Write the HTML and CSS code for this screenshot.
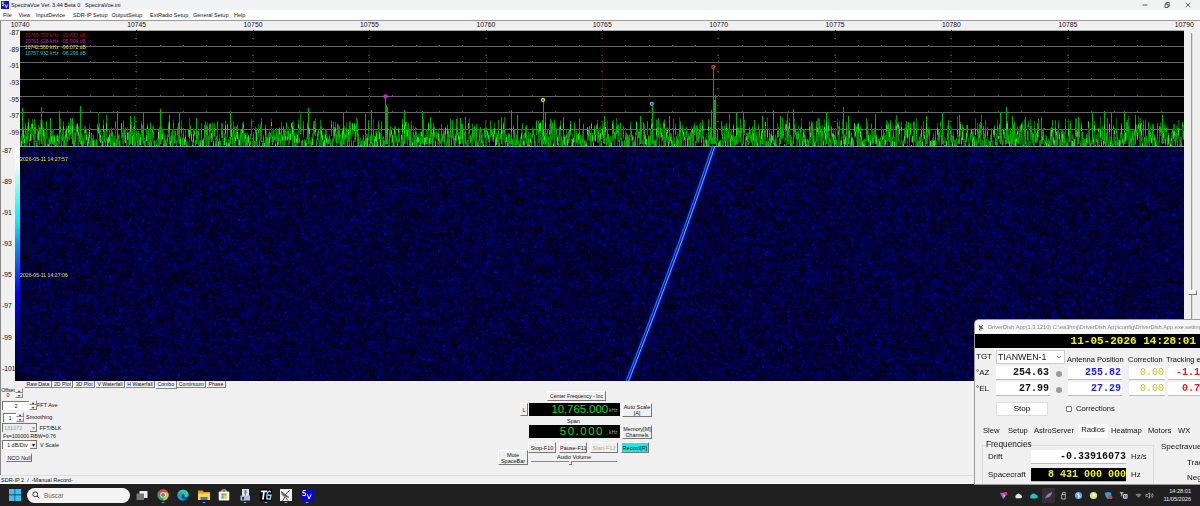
FILE: index.html
```html
<!DOCTYPE html>
<html lang="es">
<head>
    <meta charset="UTF-8">
    <meta name="viewport" content="width=device-width, initial-scale=1.0">
    <title>SpectraVue</title>
    <link rel="stylesheet" href="styles.css">
</head>
<body>
    <header class="titlebar">
        <svg class="app-icon" viewBox="0 0 8 8">
            <rect width="8" height="8" fill="#1414b8"/>
            <path d="M3.2 1.2H1.3v1.7h1.6v1.6H1M4.3 3.5l1 3.3L6.6 3.5" fill="none" stroke="#fff" stroke-width=".8"/>
        </svg>
        <span class="title-text">SpectraVue Ver. 3.44 Beta 0</span>
        <span class="title-text title-file">SpectraVue.ini</span>
        <div class="window-buttons">
            <svg viewBox="0 0 6 6"><path d="M.5 3h5"/></svg>
            <svg viewBox="0 0 6 6"><path d="M1 2h3v3.500H1zM2 2V.6h3.300v3.800H4"/></svg>
            <svg viewBox="0 0 6 6"><path d="M.7.7l4.600 4.600M5.300.7L.7 5.300"/></svg>
        </div>
    </header>

    <nav class="menubar">
        <span class="m-file">File</span>
        <span class="m-view">View</span>
        <span class="m-input">InputDevice</span>
        <span class="m-sdr">SDR-IP Setup</span>
        <span class="m-output">OutputSetup</span>
        <span class="m-ext">ExtRadio Setup</span>
        <span class="m-general">General Setup</span>
        <span>Help</span>
    </nav>

    <div class="ruler">
        <div class="ruler-labels">
            <span>10740</span><span>10745</span><span>10750</span><span>10755</span><span>10760</span><span>10765</span><span>10770</span><span>10775</span><span>10780</span><span>10785</span><span>10790</span>
        </div>
    </div>

    <main class="plots">
        <div class="scales">
            <div class="scale scale-spectrum">
                <span>-87</span><span>-89</span><span>-91</span><span>-93</span><span>-95</span><span>-97</span><span>-99</span>
            </div>
            <div class="scale-row">
                <div class="scale scale-waterfall">
                    <span>-87</span><span>-89</span><span>-91</span><span>-93</span><span>-95</span><span>-97</span><span>-99</span><span>-101</span>
                </div>
                <div class="palette"></div>
            </div>
        </div>
        <div class="plot-area">
            <canvas id="plot" width="1164" height="351"></canvas>
            <div class="peaks">
                <p class="peak-red">10769.759 kHz &nbsp;-90.840 dB</p>
                <p class="peak-magenta">10761.328 kHz &nbsp;-95.904 dB</p>
                <p class="peak-yellow">10742.560 kHz &nbsp;-96.072 dB</p>
                <p class="peak-cyan">10757.932 kHz &nbsp;-96.296 dB</p>
            </div>
            <span class="stamp stamp-first">2026-05-11 14:27:57</span>
            <span class="stamp stamp-second">2026-05-11 14:27:06</span>
        </div>
        <div class="vslider">
            <div class="vslider-track"></div>
            <div class="vslider-thumb"></div>
            <div class="vslider-track rest"></div>
        </div>
    </main>

    <section class="panel">
        <div class="panel-left">
            <div class="tabs">
                <span>Raw Data</span><span>2D Plot</span><span>3D Plot</span><span>V Waterfall</span><span>H Waterfall</span><span class="active">Combo</span><span>Continuum</span><span>Phase</span>
            </div>
            <div class="row row-offset">
                <div class="offset">Offset<br>0</div>
                <div class="spin"><i>▴</i><i>▾</i></div>
            </div>
            <div class="row row-axe">
                <div class="field">2</div>
                <div class="spin"><i>▴</i><i>▾</i></div>
                <span>FFT Ave</span>
            </div>
            <div class="row row-smooth">
                <div class="field small">1</div>
                <div class="spin"><i>▴</i><i>▾</i></div>
                <span>Smoothing</span>
            </div>
            <div class="row row-blk">
                <div class="combo disabled">131072<i>▾</i></div>
                <span>FFT/BLK</span>
            </div>
            <div class="row row-info">Fs=100000 RBW=0.76</div>
            <div class="row row-scale">
                <div class="combo">1 dB/Div<i>▾</i></div>
                <span>V Scale</span>
            </div>
            <button class="btn btn-nco">NCO Null</button>
        </div>

        <div class="tuner">
            <button class="btn btn-center">Center Frequency - Inc</button>
            <div class="tuner-row">
                <button class="btn btn-l">L</button>
                <div class="lcd"><b class="lcd-center">10,765.000</b><small>kHz</small></div>
                <button class="btn btn-side">Auto Scale<br>[A]</button>
            </div>
            <div class="span-label">Span</div>
            <div class="tuner-row tuner-span">
                <div class="lcd"><b class="lcd-span">50.000</b><small>kHz</small></div>
                <button class="btn btn-side">Memory[M]<br>Channels</button>
            </div>
            <div class="tuner-row tuner-keys">
                <button class="btn">Stop-F10</button>
                <button class="btn">Pause-F11</button>
                <button class="btn off">Start-F12</button>
                <button class="btn record">Record[R]</button>
            </div>
            <div class="tuner-audio">
                <button class="btn btn-mute">Mute<br>SpaceBar</button>
                <div class="audio">
                    <span>Audio Volume</span>
                    <div class="audio-track"><div class="audio-thumb"></div></div>
                </div>
            </div>
        </div>
    </section>

    <div class="statusbar">SDR-IP 2 &nbsp;/ &nbsp;-Manual Record-</div>

    <aside class="dish">
        <div class="dish-title">
            <svg viewBox="0 0 8 8"><path d="M1 1l6 4.500M6.500.8L3.500 4M2 2.200q0 3.500 4 3.500M3 5L1.500 7.300h3" fill="none" stroke="#222"/></svg>
            <span>DriverDish.App(1.3.1210) C:\ea3hmj\DriverDish.App\config\DriverDish.App.exe.settings</span>
        </div>
        <div class="dish-clock">11-05-2026 14:28:01</div>
        <div class="dish-grid">
            <span class="lbl">TGT</span>
            <div class="target"><span>TIANWEN-1</span><svg viewBox="0 0 6 4"><path d="M1 1l2 2 2-2" fill="none" stroke="#555" stroke-width=".7"/></svg></div>
            <span class="head head-ant">Antenna Position</span>
            <span class="head head-cor">Correction</span>
            <span class="head head-trk">Tracking error</span>

            <span class="lbl">°AZ</span>
            <div class="val">254.63</div>
            <i class="led"></i>
            <div class="val blue">255.82</div>
            <div class="val olive">0.00</div>
            <div class="val red">-1.19</div>

            <span class="lbl">°EL</span>
            <div class="val">27.99</div>
            <i class="led"></i>
            <div class="val blue">27.29</div>
            <div class="val olive">0.00</div>
            <div class="val red">0.70</div>
        </div>
        <div class="dish-actions">
            <button class="stop">Stop</button>
            <i class="check"></i>
            <span>Corrections</span>
        </div>
        <div class="dish-tabs">
            <span class="t1">Slew</span><span class="t2">Setup</span><span class="t3">AstroServer</span><span class="t4 active">Radios</span><span class="t5">Heatmap</span><span class="t6">Motors</span><span class="t7">WX</span>
        </div>
        <div class="dish-page">
            <fieldset class="freqs">
                <legend>Frequencies</legend>
                <div class="freq-row"><span>Drift</span><div class="val drift">-0.33916073</div><span>Hz/s</span></div>
                <div class="freq-row"><span>Spacecraft</span><div class="val craft">8 431 000 000</div><span>Hz</span></div>
            </fieldset>
            <div class="spectravue">
                <p>Spectravue</p>
                <p class="indent">Track</p>
                <p class="indent neg">Negate</p>
            </div>
        </div>
    </aside>

    <footer class="taskbar">
        <svg class="start" viewBox="0 0 12 12">
            <path d="M0 0h5.600v5.600H0zM6.200 0H12v5.600H6.200zM0 6.200h5.600V12H0zM6.200 6.200H12V12H6.200z" fill="#42bdf5"/>
        </svg>
        <div class="search">
            <svg viewBox="0 0 8 8"><circle cx="3.300" cy="3.300" r="2.400" fill="none" stroke="#222" stroke-width=".9"/><path d="M5 5l2.200 2.200" stroke="#222" stroke-width="1"/></svg>
            <span>Buscar</span>
        </div>
        <div class="apps">
            <svg viewBox="0 0 12 14"><rect x="3.500" y="2" width="8" height="7" fill="#eee"/><rect x=".5" y="4.500" width="7.500" height="6.500" fill="#777"/></svg>
            <svg viewBox="0 0 12 14">
                <circle cx="6" cy="6" r="5.600" fill="#34a853"/>
                <path d="M1.100 3.200A5.600 5.600 0 0 1 11 3.500H6L3.600 7.400z" fill="#ea4335"/>
                <path d="M11 3.500A5.600 5.600 0 0 1 5.600 11.600L8.400 7.300 6 3.500z" fill="#fbbc05"/>
                <circle cx="6" cy="6" r="2.700" fill="#fff"/><circle cx="6" cy="6" r="2.100" fill="#4285f4"/>
                <rect x="4.700" y="13" width="2.600" height="1" fill="#999"/>
            </svg>
            <svg viewBox="0 0 12 14">
                <circle cx="6" cy="6" r="5.600" fill="#0c74c8"/>
                <path d="M.7 4.800C2-.6 11-.8 11.600 5.500 11.500 8.600 8 8.600 7.200 7.700 8.300 6 6.700 4 4.500 4 2.500 4 1 5 .5 6.500z" fill="#35c98b"/>
                <path d="M.5 6C1 3 6 2.500 7 5.500 3.500 4.500 3 9.500 7 11.500 3 12 0 9 .5 6z" fill="#1c9cdd"/>
                <path d="M6.700 5.500q1 1 .5 2.400 1.500 1.300 4.200.2-1 1.500-3 1.500Q5 9 5.200 7q0-1.500 1.500-1.500z" fill="#1d2833"/>
            </svg>
            <svg viewBox="0 0 12 14">
                <path d="M0 1.500h4.500l1.300 1.600H12V11H0z" fill="#e59a17"/><path d="M0 4.300h12V11H0z" fill="#ffd253"/>
                <path d="M2.500 8h7v3h-7z" fill="#2c7fd0"/><rect x="4.700" y="13" width="2.600" height="1" fill="#999"/>
            </svg>
            <svg viewBox="0 0 12 14">
                <path d="M4 3V1h4v2" fill="none" stroke="#ddd" stroke-width="1"/><rect x=".7" y="2.500" width="10.600" height="9" rx="1" fill="#f4f4f4"/>
                <path d="M3.500 4.500h2.200v2.200H3.500z" fill="#f25022"/><path d="M6.300 4.500h2.200v2.200H6.300z" fill="#7fba00"/>
                <path d="M3.500 7.300h2.200v2.200H3.500z" fill="#00a4ef"/><path d="M6.300 7.300h2.200v2.200H6.300z" fill="#ffb900"/>
            </svg>
            <svg viewBox="0 0 12 14">
                <path d="M3 0h7v8H3z" fill="#eef"/><path d="M4.500 2h4M4.500 4h4M6.500 1v6" stroke="#476aa0" stroke-width=".8"/>
                <path d="M1.500 6.500h9.500v5H1.500z" fill="#aebdde"/><path d="M3 8h2v2.500H3z" fill="#26355b"/><rect x="4.700" y="13" width="2.600" height="1" fill="#999"/>
            </svg>
            <svg viewBox="0 0 12 14">
                <rect width="12" height="12" fill="#050505"/><path d="M.8 2.300h6.400M4 2.300L3 10.500" stroke="#fff" stroke-width="1.700"/>
                <path d="M10.800 2.800Q7.500 1 7 6T7.400 10h2.800L11 6.200H8" fill="none" stroke="#8edcf5" stroke-width="1.400"/><rect x="4.700" y="13" width="2.600" height="1" fill="#999"/>
            </svg>
            <svg viewBox="0 0 12 14">
                <rect width="12" height="12" fill="#eee"/><path d="M1 2.500Q1.500 9 8.800 8.400z" fill="#777"/>
                <path d="M1 2.500l8 6M5 6l4.500-4.500M5 8l-2.500 4M5.500 8.500l2.500 3" stroke="#222" stroke-width=".8"/><rect x="4.700" y="13" width="2.600" height="1" fill="#999"/>
            </svg>
            <svg viewBox="0 0 12 14">
                <rect width="12" height="12" fill="#0505d5"/><path d="M4.700 1.500H2v2.500h2.500v2.500H1.500M6.300 5.200L8 10l2.200-4.800" fill="none" stroke="#fff" stroke-width="1"/>
                <rect x="4.700" y="13" width="2.600" height="1" fill="#999"/>
            </svg>
        </div>
        <div class="tray">
            <svg viewBox="0 0 10 10"><path d="M1 2h4l1 3-1.500 4z" fill="#8a5cf0"/><path d="M5 2h4L5 9z" fill="#d9b4e8"/><circle cx="7.500" cy="3" r="2" fill="#e33"/></svg>
            <svg viewBox="0 0 10 10"><path d="M2.500 8a2 2 0 0 1 0-3.500 2.700 2.700 0 0 1 5 0 1.800 1.800 0 0 1 0 3.500z" fill="#e6e6e6"/></svg>
            <svg viewBox="0 0 10 10"><path d="M2.500 8.300a2.200 2.200 0 0 1 0-4 2.900 2.900 0 0 1 5.200 0 2 2 0 0 1 0 4z" fill="#20c4cf"/></svg>
            <span class="tray-hot"><svg viewBox="0 0 10 10"><path d="M1 9Q2 3 9 1 8 7 2.500 7.500z" fill="#9a72c8"/></svg></span>
            <svg viewBox="0 0 10 10"><path d="M3 4h4v5H3zM4 4V1.500h3V4" fill="none" stroke="#ddd" stroke-width=".8"/></svg>
            <svg viewBox="0 0 10 10"><circle cx="5" cy="5" r="4" fill="#62a6ee"/><path d="M3 3l4 4M5 2v6l2-2-4-3" fill="none" stroke="#e8f3ff" stroke-width=".8"/></svg>
            <svg viewBox="0 0 10 10"><circle cx="5" cy="5" r="4" fill="#dbe58c"/><path d="M5 2.500V5l2-1.500" fill="none" stroke="#fff" stroke-width="1"/></svg>
            <svg viewBox="0 0 10 10"><path d="M1 2l4-1 3 1v3Q7 8 4.500 9 1 7 1 2z" fill="#2aa1e0"/><circle cx="7" cy="7" r="2.300" fill="#e23b3b"/></svg>
            <svg viewBox="0 0 10 10"><path d="M1 2h4M3 2v4M5 4v4h4V4zM7 4v4" fill="none" stroke="#eef" stroke-width="1"/><path d="M6 6h3" stroke="#7c7cff"/></svg>
            <svg class="wifi" viewBox="0 0 10 10"><path d="M1.500 4Q5 1.500 8.500 4L5 7.500z" fill="#777"/></svg>
            <svg viewBox="0 0 10 10"><path d="M1 4h2l2-2v6L3 6H1zM6.500 3.500q1.500 1.500 0 3M8 2.500q2 2.500 0 5" fill="none" stroke="#ddd" stroke-width=".7"/></svg>
        </div>
        <div class="clock">14:28:01<br>11/05/2026</div>
    </footer>

    <script src="script.js"></script>
</body>
</html>
```
FILE: styles.css
```css
* {
    margin: 0;
    padding: 0;
    box-sizing: border-box;
}

body {
    position: relative;
    width: 1200px;
    height: 506px;
    overflow: hidden;
    display: flex;
    flex-direction: column;
    background: #f0f0f0;
    font-family: "Liberation Sans", Arial, sans-serif;
    font-size: 5.5px;
    color: #111;
    white-space: nowrap;
}

i {
    font-style: normal;
}

/* title + menu */
.titlebar {
    height: 10px;
    display: flex;
    align-items: center;
    background: #f1f2f4;
}

.app-icon {
    width: 8px;
    height: 8px;
    margin: 0 2px 0 1px;
}

.title-text {
    width: 74px;
    font-size: 5.5px;
}

.title-file {
    width: auto;
}

.window-buttons {
    margin-left: auto;
    margin-right: 9px;
    display: flex;
    gap: 15.500px;
}

.window-buttons svg {
    width: 6px;
    height: 6px;
    fill: none;
    stroke: #222;
    stroke-width: .7;
}

.menubar {
    height: 10px;
    padding-left: 3px;
    display: flex;
    align-items: center;
    background: #fff;
    font-size: 5.5px;
}

.m-file { width: 15.500px; }
.m-view { width: 17.500px; }
.m-input { width: 37px; }
.m-sdr { width: 38.500px; }
.m-output { width: 38.500px; }
.m-ext { width: 43px; }
.m-general { width: 41px; }

.ruler {
    height: 10px;
    border-top: 1px solid #9a9a9a;
    box-shadow: inset 1px 0 #888;
    overflow: hidden;
}

.ruler-labels {
    width: 1280.400px;
    margin-left: -38px;
    display: flex;
    font-size: 6.8px;
    line-height: 8px;
    text-align: center;
}

.ruler-labels span {
    flex: 1;
}

/* plots */
.plots {
    height: 351px;
    display: flex;
}

.scales {
    width: 20px;
    border-left: 1px solid #888;
    font-size: 6.8px;
}

.scale {
    display: flex;
    flex-direction: column;
    text-align: right;
}

.scale span {
    flex: none;
}

.scale-spectrum {
    height: 117px;
    padding-right: 1px;
}

.scale-spectrum span {
    height: 16.700px;
    line-height: 5px;
}

.scale-row {
    display: flex;
    justify-content: flex-end;
}

.scale-waterfall {
    height: 234px;
    width: 14px;
    text-align: left;
    padding-left: 1px;
}

.scale-waterfall span {
    height: 31.100px;
    line-height: 8px;
}

.palette {
    width: 5px;
    height: 234px;
    background: linear-gradient(#fff 0, #e8ffff 8%, #30ffff 24%, #00e8ff 33%, #0090ff 42%, #0050ff 52%, #0000ff 62%, #0000a8 75%, #000060 87%, #000018 100%);
}

.plot-area {
    position: relative;
    width: 1164px;
    height: 351px;
}

.plot-area canvas {
    display: block;
}

.peaks {
    position: absolute;
    left: 5px;
    top: 2px;
    font-size: 5px;
    line-height: 6.100px;
}

.peak-red { color: #c01010; }
.peak-magenta { color: #c818c8; }
.peak-yellow { color: #e0e020; }
.peak-cyan { color: #18c8c8; }

.stamp {
    position: absolute;
    left: 0;
    font-size: 5.200px;
    line-height: 6px;
    color: #e4e430;
}

.stamp-first { top: 126px; }
.stamp-second { top: 242px; }

.vslider {
    flex: 1;
    padding-top: 3px;
    display: flex;
    flex-direction: column;
    align-items: center;
}

.vslider-track {
    width: 2px;
    height: 257px;
    flex: none;
    border-left: 1px solid #999;
    background: #ddd;
}

.vslider-track.rest {
    height: auto;
    flex: 1;
}

.vslider-thumb {
    width: 9px;
    height: 5px;
    background: #f0f0f0;
    border: 1px solid #fff;
    border-right-color: #777;
    border-bottom-color: #777;
}

/* bottom panel */
.panel {
    height: 94px;
    border-left: 1px solid #888;
    display: flex;
}

.panel-left {
    width: 497px;
    font-size: 5.500px;
}

.tabs {
    height: 9px;
    margin-top: -1px;
    padding-left: 24px;
    display: flex;
}

.tabs span {
    height: 8px;
    padding: 0 1.500px;
    border-right: 1px solid #777;
    border-bottom: 1px solid #888;
    line-height: 8px;
    font-size: 5.200px;
    margin-right: .7px;
}

.tabs .active {
    height: 9px;
    line-height: 9px;
}

.row {
    display: flex;
    align-items: center;
}

.row-offset {
    height: 10px;
    margin-top: -1px;
}

.offset {
    width: 14px;
    line-height: 5px;
    text-align: center;
    font-size: 5.200px;
}

.spin {
    width: 8px;
    height: 10px;
    display: flex;
    flex-direction: column;
}

.spin i {
    height: 5px;
    font-size: 4px;
    line-height: 4px;
    text-align: center;
    border: 1px solid #fff;
    border-right-color: #888;
    border-bottom-color: #888;
}

.row-axe {
    margin-top: 2px;
    padding-left: 1px;
}

.field {
    width: 27px;
    height: 9px;
    background: #fff;
    border-top: 1px solid #777;
    border-left: 1px solid #777;
    text-align: center;
    line-height: 8px;
}

.field.small {
    width: 13px;
}

.row-smooth {
    margin-top: 2px;
    padding-left: 2px;
}

.row-smooth span {
    padding-left: 2px;
}

.combo {
    width: 35px;
    height: 9px;
    padding-left: 4px;
    display: flex;
    justify-content: space-between;
    background: #fff;
    border-top: 1px solid #777;
    border-left: 1px solid #777;
    line-height: 8px;
}

.combo i {
    width: 7px;
    background: #f0f0f0;
    border-right: 1px solid #777;
    border-bottom: 1px solid #777;
    text-align: center;
}

.combo.disabled {
    padding-left: 1px;
    background: #eee;
    color: #999;
}

.row-blk {
    margin-top: 1px;
    padding-left: 1px;
    gap: 2.500px;
}

.row-info {
    height: 8px;
    padding-left: 2px;
    font-size: 5.200px;
}

.row-scale {
    padding-left: 1px;
    gap: 3px;
}

.btn {
    display: block;
    border: 1px solid #fff;
    border-right-color: #777;
    border-bottom-color: #777;
    background: #f0f0f0;
    font-family: inherit;
    font-size: 5.500px;
    line-height: 6px;
    text-align: center;
    white-space: nowrap;
    color: #111;
}

.btn-nco {
    width: 26px;
    height: 9px;
    margin: 4px 0 0 5px;
}

.tuner {
    width: 160px;
    padding-top: 10px;
}

.btn-center {
    width: 59px;
    height: 10px;
    margin-left: 49px;
    font-size: 5.200px;
}

.tuner-row {
    display: flex;
    margin-left: 22px;
    margin-top: 2px;
    height: 14px;
}

.btn-l {
    width: 8px;
    height: 13px;
    margin-right: 1px;
}

.lcd {
    width: 91px;
    height: 13px;
    padding-right: 1px;
    display: flex;
    align-items: center;
    justify-content: flex-end;
    background: #000;
    color: #10d820;
}

.lcd b {
    font-weight: 400;
    font-size: 11.500px;
    line-height: 13px;
}

.lcd small {
    width: 11px;
    padding-left: 1px;
    font-size: 5px;
    color: #9aa09a;
}

.lcd-center {
    letter-spacing: -.1px;
}

.lcd .lcd-span {
    letter-spacing: 1.500px;
    margin-right: 4px;
}

.btn-side {
    width: 30px;
    height: 14px;
    margin-left: 2px;
}

.span-label {
    height: 7px;
    line-height: 8px;
    margin-left: 69px;
}

.tuner-span {
    margin-left: 31px;
    margin-top: 1px;
}

.tuner-keys {
    margin: 3px 0 0 30px;
    height: 11px;
    gap: 3px;
}

.tuner-keys .btn {
    width: 28px;
    height: 11px;
}

.tuner-keys .off {
    color: #aaa;
}

.tuner-keys .record {
    background: #20e8e8;
}

.tuner-audio {
    display: flex;
    margin-top: -3px;
}

.btn-mute {
    width: 30px;
    height: 15px;
}

.audio {
    width: 86px;
    margin: 4px 0 0 3px;
    line-height: 6px;
    text-align: center;
}

.audio-track {
    margin-top: 1px;
    height: 1px;
    background: #888;
}

.audio-thumb {
    width: 3px;
    height: 4px;
    margin-left: 38px;
    background: #f0f0f0;
    border-right: 1px solid #777;
    border-bottom: 1px solid #777;
}

.statusbar {
    height: 9px;
    padding-left: 1px;
    border-top: 1px solid #ddd;
    border-bottom: 1px solid #fff;
    line-height: 8px;
    font-size: 5.500px;
}

/* DriverDish window */
.dish {
    position: absolute;
    left: 975px;
    top: 320px;
    width: 225px;
    height: 164px;
    overflow: hidden;
    background: #f0f0f0;
    border-top-left-radius: 4px;
    box-shadow: 0 0 0 1px #999;
    font-size: 8px;
}

.dish-title {
    height: 14px;
    padding-left: 3px;
    display: flex;
    align-items: center;
    gap: 4px;
    background: #f6f6f6;
    color: #888;
    font-size: 5.700px;
    letter-spacing: -.04px;
}

.dish-title svg {
    width: 6px;
    height: 7px;
    flex: none;
}

.dish-clock {
    height: 14px;
    padding-right: 4px;
    background: #000;
    color: #f0f020;
    font: bold 11px/14px "Liberation Mono", monospace;
    text-align: right;
}

.dish-grid {
    width: 262px;
    padding: 2px 0 0 1px;
    display: grid;
    grid-template-columns: 20px 54px 18px 54px 7px 36px 3px 68px;
    grid-template-rows: 16px 16px 16px;
}

.dish-grid .lbl {
    grid-column: 1;
    line-height: 13px;
}

.target {
    grid-column: 2 / 4;
    width: 69px;
    height: 14px;
    padding: 0 2px 0 1px;
    display: flex;
    align-items: center;
    justify-content: space-between;
    background: #fff;
    border: 1px solid #ccc;
    font-size: 8.800px;
}

.target svg {
    width: 6px;
    height: 4px;
}

.head {
    font-size: 7.500px;
    line-height: 20px;
}

.head-ant { grid-column: 4; margin-left: -1px; }
.head-cor { grid-column: 6; margin-left: -1px; }
.head-trk { grid-column: 8; margin-left: -2px; }

.val {
    height: 14px;
    background: #fff;
    border-bottom: 1px solid #bbb;
    font: bold 10px/13px "Liberation Mono", monospace;
    text-align: right;
}

.dish-grid .val {
    height: 14px;
    padding-right: 1px;
}

.dish-grid .blue { grid-column: 4; color: #2020e8; }
.dish-grid .olive { grid-column: 6; color: #c0c030; font-weight: 400; }
.dish-grid .red { grid-column: 8; color: #e02020; padding-right: 30px; }

.led {
    width: 6px;
    height: 6px;
    margin: 5px 0 0 6px;
    border-radius: 50%;
    background: #9a9a9a;
}

.dish-actions {
    height: 17px;
    margin-top: 2px;
    padding-left: 21px;
    display: flex;
    align-items: center;
    font-size: 7.600px;
}

.stop {
    width: 52px;
    height: 14px;
    border: 1px solid #ddd;
    background: #fdfdfd;
    font: 8px "Liberation Sans", sans-serif;
}

.check {
    width: 6px;
    height: 6px;
    margin: 0 4px 0 18px;
    border: 1px solid #777;
    border-radius: 1px;
    background: #fff;
}

.dish-tabs {
    height: 14px;
    margin-top: 7px;
    padding-left: 8px;
    display: flex;
    font-size: 7.600px;
    line-height: 14px;
}

.t1 { width: 25px; }
.t2 { width: 26px; }
.t3 { width: 44px; }
.t4 { width: 30px; }
.t5 { width: 40px; padding-left: 3px; }
.t6 { width: 30px; }

.dish-tabs .active {
    background: #fafafa;
    text-align: center;
    line-height: 12px;
}

.dish-page {
    display: flex;
    padding: 3px 0 0 7px;
}

.freqs {
    width: 172px;
    height: 60px;
    flex: none;
    padding-left: 5px;
    border: 1px solid #ddd;
    font-size: 7.900px;
}

.freqs legend {
    margin-left: -2px;
    padding-bottom: 2px;
    font-size: 8.300px;
    line-height: 7px;
}

.freq-row {
    display: flex;
    height: 18px;
    line-height: 14px;
}

.freq-row span:first-child {
    width: 43px;
}

.freq-row span:last-child {
    padding-left: 5px;
}

.drift {
    width: 95px;
}

.craft {
    width: 95px;
    background: #000;
    color: #f0f020;
}

.spectravue {
    padding: 1px 0 0 7px;
    font-size: 8px;
    line-height: 9px;
}

.indent {
    padding: 7px 0 0 26px;
}

.indent.neg {
    padding-top: 6px;
}

/* taskbar */
.taskbar {
    height: 22px;
    padding-left: 9px;
    display: flex;
    align-items: center;
    background: #202020;
}

.start {
    width: 12px;
    height: 12px;
}

.search {
    width: 103px;
    height: 15px;
    margin: 0 6px;
    padding-left: 5px;
    display: flex;
    align-items: center;
    gap: 4px;
    border-radius: 8px;
    background: #f3f3f3;
    color: #666;
    font-size: 6.300px;
}

.search svg {
    width: 8px;
    height: 8px;
}

.apps {
    display: flex;
    gap: 8.600px;
}

.apps svg {
    width: 12px;
    height: 14px;
    margin-top: 1px;
}

.tray {
    margin-left: auto;
    display: flex;
    align-items: center;
    gap: 6px;
}

.tray svg {
    display: block;
    width: 9px;
    height: 9px;
}

.tray-hot {
    margin: 0 -2px;
    padding: 3px 2px;
    border-radius: 2px;
    background: #333035;
}

.tray .wifi {
    margin-right: -4px;
}

.clock {
    width: 46px;
    padding-right: 9px;
    color: #eee;
    font-size: 5.600px;
    line-height: 8px;
    text-align: right;
}
```
FILE: script.js
```js
const canvas = document.getElementById('plot');
const ctx = canvas.getContext('2d');
const W = canvas.width;
const H = canvas.height;
const SPLIT = 117;
const LEFT = 20;

// fixed seed so the noise is the same on every load
let seed = 20260511;
function rand() {
    seed = (seed * 1664525 + 1013904223) >>> 0;
    return seed / 4294967296;
}

function drawGrid() {
    ctx.fillStyle = '#000';
    ctx.fillRect(0, 0, W, SPLIT);
    for (let i = 0; i <= 6; i++) {
        const y = Math.round(i * 16.65);
        ctx.fillStyle = i ? '#666' : '#aaa';
        ctx.fillRect(0, i ? y - 1 : 0, W, 1);
        ctx.fillStyle = '#585858';
        for (let k = 1; k < 50; k++) {
            ctx.fillRect(Math.round(k * 23.28), y - 2, 1, 2);
        }
    }
    for (let k = 1; k < 10; k++) {
        const x = Math.round(k * 116.4);
        ctx.fillStyle = k === 5 ? '#702020' : '#484848';
        for (let y = 8; y < SPLIT; y += 16.65) {
            ctx.fillRect(x - 1, Math.round(y), 2, 1);
        }
        ctx.fillStyle = k === 5 ? '#401010' : '#1c1c1c';
        for (let y = 0; y < SPLIT; y += 3) {
            ctx.fillRect(x, y, 1, 1);
        }
    }
}

// [x, y] of the tallest spikes, window coordinates
const spikes = [
    [22, 108], [41, 107], [50, 118], [59, 111], [72, 118], [80, 106], [117, 111], [130, 116], [143, 113],
    [160, 109], [169, 115], [179, 113], [196, 118], [230, 113], [308, 108], [343, 113], [365, 114], [371, 110],
    [385, 98], [386, 105], [387, 107], [404, 110], [422, 111], [430, 117], [460, 118], [465, 117], [501, 117],
    [511, 110], [517, 115], [543, 101], [545, 112], [563, 117], [579, 119], [604, 116], [640, 116], [652, 106],
    [669, 116], [711, 110], [713, 67], [714, 100], [715, 95], [736, 113], [743, 112], [762, 116], [773, 110],
    [780, 116], [793, 109], [826, 112], [843, 107], [848, 116], [875, 114], [926, 116], [942, 113], [959, 115],
    [1000, 112], [1006, 107], [1012, 116], [1025, 117], [1041, 117], [1078, 117], [1092, 113], [1104, 111],
    [1111, 112], [1124, 111], [1135, 115], [1162, 115]
];

function drawSpectrum() {
    const tall = new Map(spikes.map(([x, y]) => [x - LEFT, y - 30]));
    let prev = 105;
    for (let x = 0; x < W; x++) {
        let top = 111 - Math.pow(rand(), 1.3) * 23;
        if (rand() < 0.07) top -= 6;
        let bottom = Math.min(SPLIT, Math.max(prev, top + 4 + rand() * 15));
        if (rand() < 0.3) bottom = SPLIT;
        let shade = Math.floor(95 + rand() * 65);
        if (tall.has(x)) {
            top = tall.get(x);
            bottom = SPLIT - 3;
            shade = 175;
        }
        ctx.fillStyle = `rgb(0, ${shade}, 0)`;
        ctx.fillRect(x, top, 1, bottom - top);
        ctx.fillStyle = rand() < 0.35 ? '#28e028' : '#0cb00c';
        ctx.fillRect(x, Math.max(top, 92) + rand() * 8, 1, 3 + rand() * 6);
        prev = 104 + rand() * 9;
    }
    ctx.fillStyle = '#8aa';
    ctx.fillRect(0, SPLIT - 1, W, 1);
}

function drawMarker(x, y, color) {
    ctx.strokeStyle = color;
    ctx.lineWidth = 1.3;
    ctx.beginPath();
    ctx.arc(x - LEFT, y - 30, 1.5, 0, Math.PI * 2);
    ctx.stroke();
}

function drawWaterfall() {
    const h = H - SPLIT;
    const img = ctx.createImageData(W, h);
    const level = new Float32Array(W * h);
    for (let i = 0; i < level.length; i++) {
        // average a few draws with the row above, gives soft vertical clumps
        const n = Math.pow(rand(), 2.2);
        level[i] = n * 0.5 + (level[i - W] || 0) * 0.3 + (level[i - 1] || 0) * 0.2;
    }
    for (let i = 0; i < level.length; i++) {
        const v = (level[i] * 2 + (level[i + 1] || 0) + (level[i + W] || 0)) / 4;
        const b = Math.min(160, Math.max(6, v * 235 - 12));
        img.data[i * 4] = 0;
        img.data[i * 4 + 1] = b > 125 ? (b - 125) * 0.5 : 0;
        img.data[i * 4 + 2] = b;
        img.data[i * 4 + 3] = 255;
    }
    ctx.putImageData(img, 0, SPLIT);
}

function trackPath(offset) {
    ctx.beginPath();
    ctx.moveTo(693.5 + offset, SPLIT);
    ctx.quadraticCurveTo(659 + offset, 220, 607.5 + offset, H);
}

function drawTrack() {
    const strokes = [
        [0, 8, 'rgba(0, 20, 190, 0.25)'],
        [0, 4.5, 'rgba(0, 50, 215, 0.6)'],
        [-1.3, 1, '#2478e8'],
        [1.1, 1, '#58b8ff']
    ];
    for (const [offset, width, color] of strokes) {
        trackPath(offset);
        ctx.lineWidth = width;
        ctx.strokeStyle = color;
        ctx.stroke();
    }
}

drawGrid();
drawSpectrum();
drawMarker(385.5, 96.5, '#d030d0');
drawMarker(543, 100, '#e8e820');
drawMarker(651.8, 103.8, '#30d8e0');
drawMarker(713.2, 67, '#e03010');
drawWaterfall();
drawTrack();
```
